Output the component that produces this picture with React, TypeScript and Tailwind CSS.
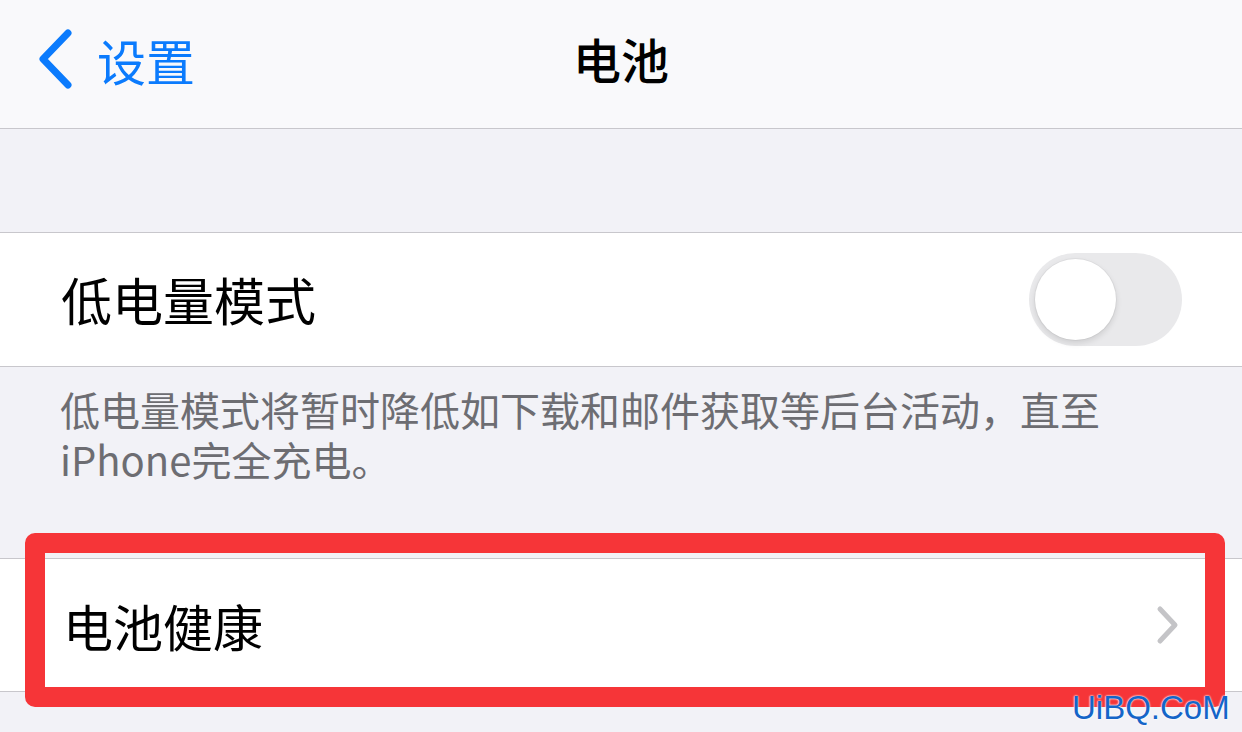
import React from "react";

const cjk = { fontFamily: '"Noto Sans CJK SC", "Noto Sans", sans-serif' };

function BackChevron() {
  return (
    <svg width="40" height="62" viewBox="0 0 40 62" fill="none">
      <path d="M33 5 L8 31 L33 57" stroke="#0b7bfd" strokeWidth="7" strokeLinecap="round" strokeLinejoin="round" />
    </svg>
  );
}

function RowChevron() {
  return (
    <svg width="24" height="40" viewBox="0 0 24 40" fill="none">
      <path d="M4 4 L19 20 L4 36" stroke="#c4c4c7" strokeWidth="5" strokeLinecap="round" strokeLinejoin="round" />
    </svg>
  );
}

function Toggle() {
  return (
    <div className="flex items-center w-[153px] h-[93px] rounded-full bg-[#e9e9eb] px-[6px]">
      <div className="w-[81px] h-[81px] rounded-full bg-white shadow-[0_3px_6px_rgba(0,0,0,0.12),0_0_0_1px_rgba(0,0,0,0.04)]" />
    </div>
  );
}

export default function App() {
  return (
    <div className="relative h-[732px] w-[1242px] overflow-hidden bg-[#f2f2f7]" style={cjk}>
      {/* Nav bar */}
      <div className="relative flex items-center h-[129px] bg-[#f9f9fb] border-b border-[#c8c7cc] pl-[35px] pb-[10px]">
        <div className="flex items-center gap-[22px]">
          <BackChevron />
          <span className="text-[49px] leading-none text-[#0b7bfd]">设置</span>
        </div>
        <div className="absolute inset-0 flex items-center justify-center pb-[12px] pointer-events-none">
          <span className="text-[48px] leading-none font-medium text-black">电池</span>
        </div>
      </div>

      {/* spacer */}
      <div className="h-[103px]" />

      {/* Low power mode row */}
      <div className="flex items-center h-[135px] bg-white border-y border-[#c8c7cc] pl-[61px] pr-[60px]">
        <span className="text-[51px] leading-none text-black">低电量模式</span>
        <div className="ml-auto">
          <Toggle />
        </div>
      </div>

      {/* footer */}
      <div className="h-[191px] pl-[60px] pt-[17px] text-[40px] leading-[50px] text-[#6d6d72]">
        <p>低电量模式将暂时降低如下载和邮件获取等后台活动，直至</p>
        <p>iPhone完全充电。</p>
      </div>

      {/* Battery health row */}
      <div className="flex items-center h-[134px] bg-white border-y border-[#c8c7cc] pl-[63px] pr-[62px]">
        <span className="text-[50px] leading-none text-black">电池健康</span>
        <div className="ml-auto">
          <RowChevron />
        </div>
      </div>

      {/* red annotation box */}
      <div className="absolute left-[25px] top-[533px] w-[1200px] h-[174px] border-[20px] border-[#f63538] rounded-[10px]" />

      {/* watermark */}
      <div
        className="absolute left-[1072px] top-[690px] text-[33px] leading-[36px] text-[#1565c8]"
        style={{ fontFamily: '"Liberation Sans", Arial, sans-serif', textShadow: "0 0 2px #fff, 0 0 2px #fff" }}
      >
        UiBQ.CoM
      </div>
    </div>
  );
}
